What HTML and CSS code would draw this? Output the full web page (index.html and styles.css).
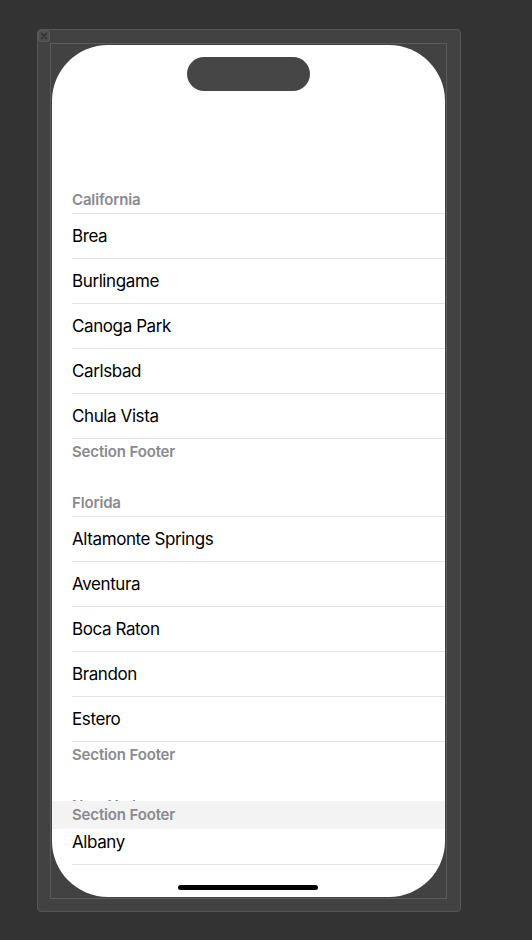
FILE: index.html
```html
<!DOCTYPE html>
<html>
<head>
<meta charset="utf-8">
<link rel="stylesheet" href="styles.css">
</head>
<body>
<div class="window">
  <div class="close"><svg width="8" height="8" viewBox="0 0 8 8"><path d="M1.5 1.5 L6.5 6.5 M6.5 1.5 L1.5 6.5" stroke="#2e2e2e" stroke-width="1.4" stroke-linecap="round"/></svg></div>
  <div class="frame">
    <div class="screen">
      <div class="viewport">
        <div class="list">
          <section class="section">
            <div class="sec-header">California</div>
            <div class="rows">
              <div class="row">Brea</div>
              <div class="row">Burlingame</div>
              <div class="row">Canoga Park</div>
              <div class="row">Carlsbad</div>
              <div class="row">Chula Vista</div>
            </div>
            <div class="sec-footer">Section Footer</div>
          </section>
          <section class="section">
            <div class="sec-header">Florida</div>
            <div class="rows">
              <div class="row">Altamonte Springs</div>
              <div class="row">Aventura</div>
              <div class="row">Boca Raton</div>
              <div class="row">Brandon</div>
              <div class="row">Estero</div>
            </div>
            <div class="sec-footer">Section Footer</div>
          </section>
          <section class="section">
            <div class="sec-header">New York</div>
            <div class="rows">
              <div class="row">Albany</div>
            </div>
          </section>
        </div>
      </div>
      <div class="sticky-footer">Section Footer</div>
      <div class="island"></div>
      <div class="home-indicator"></div>
    </div>
  </div>
</div>
</body>
</html>
```

FILE: styles.css
```css
html, body {
  margin: 0;
  padding: 0;
  background: #333333;
  font-family: Inter, "Noto Sans", "Liberation Sans", sans-serif;
}

.window {
  position: relative;
  box-sizing: border-box;
  margin: 29px 0 0 37px;
  width: 424px;
  height: 883px;
  background: #424242;
  border: 1px solid #575757;
  border-radius: 4px;
  padding: 13px 0 0 12px;
}

.close {
  position: absolute;
  left: 0;
  top: 0;
  width: 12px;
  height: 12px;
  box-sizing: border-box;
  border: 1px solid #5a5a5a;
  border-radius: 3px;
  background: #4e4e4e;
  display: flex;
  align-items: center;
  justify-content: center;
}

.frame {
  box-sizing: border-box;
  width: 397px;
  height: 856px;
  border: 1px solid #5b5b5b;
  padding: 1px;
}

.screen {
  position: relative;
  width: 393px;
  height: 852px;
  background: #ffffff;
  border-radius: 56px;
  overflow: hidden;
}

.viewport {
  height: 820px;
  overflow: hidden;
}

.list {
  padding: 144px 0 0 20px;
}

.section + .section {
  margin-top: 30px;
}

.sec-header,
.sec-footer,
.sticky-footer {
  font-size: 15px;
  font-weight: 600;
  line-height: 20px;
  color: #8a8a8e;
  letter-spacing: -0.15px;
}

.sec-header {
  padding-top: 1px;
  padding-bottom: 3px;
}

.sec-footer {
  padding-top: 3px;
}

.rows {
  border-bottom: 1px solid #e3e3e6;
}

.row {
  border-top: 1px solid #e3e3e6;
  height: 44px;
  line-height: 44px;
  font-size: 17px;
  color: #000000;
  letter-spacing: -0.4px;
}

.sticky-footer {
  position: absolute;
  left: 0;
  right: 0;
  top: 756px;
  height: 28px;
  box-sizing: border-box;
  padding: 4px 0 0 20px;
  background: #f3f3f4;
}

.island {
  position: absolute;
  top: 12px;
  left: 135px;
  width: 123px;
  height: 34px;
  border-radius: 17px;
  background: #464646;
}

.home-indicator {
  position: absolute;
  top: 840px;
  left: 126px;
  width: 140px;
  height: 5px;
  border-radius: 3px;
  background: #000000;
}
```
